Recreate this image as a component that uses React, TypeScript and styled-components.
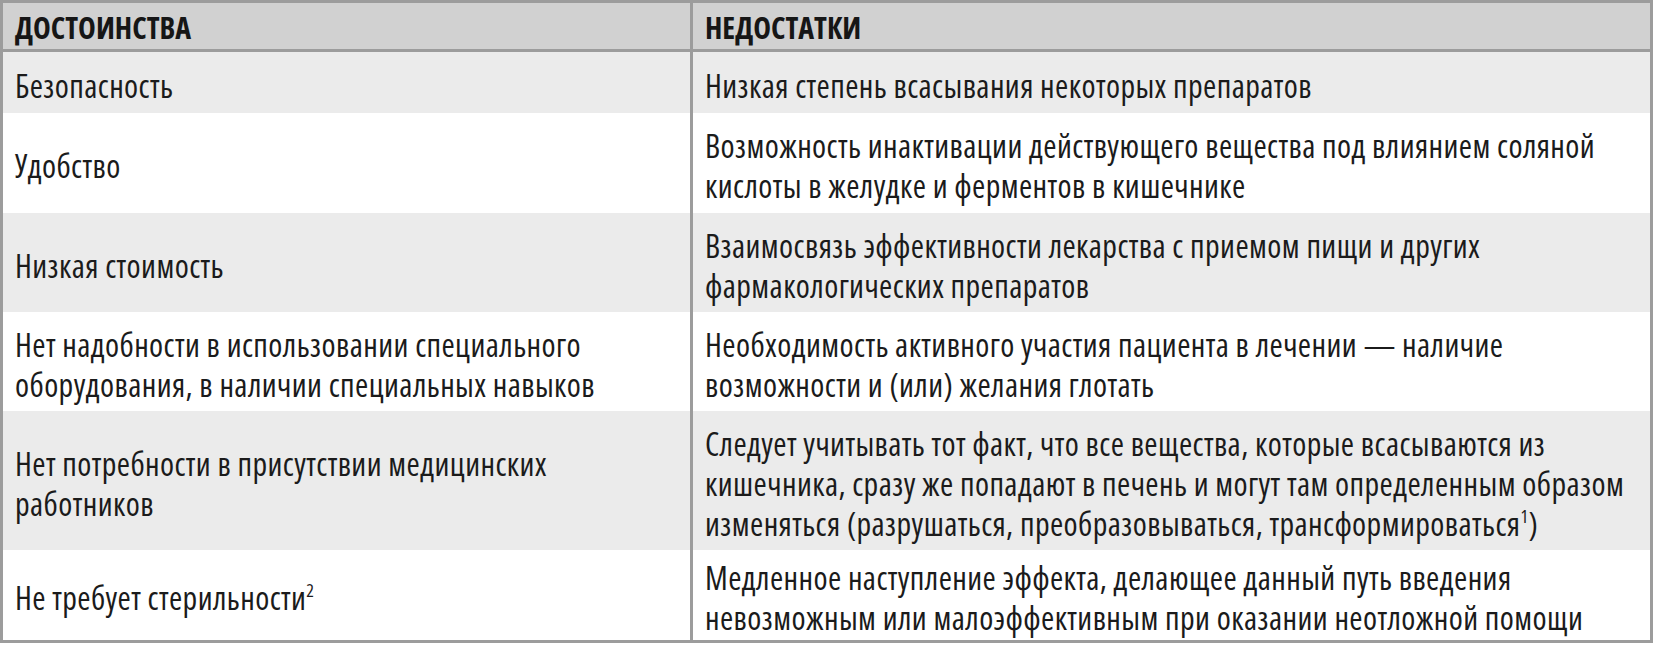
import React from 'react';
import styled, { createGlobalStyle } from 'styled-components';

const GlobalStyle = createGlobalStyle`
  html, body {
    margin: 0;
    padding: 0;
    background: #ffffff;
  }
  body {
    font-family: "Open Sans", "DejaVu Sans Condensed", sans-serif;
    font-stretch: 75%;
    color: #1b1b1b;
  }
`;

const Table = styled.div`
  width: 1653px;
  box-sizing: border-box;
  border: 3px solid #9c9c9c;
  display: grid;
  grid-template-columns: 687px 1fr;
  grid-template-rows: 49px 61px 100px 99px 99px 139px 90px;
`;

const HeadCell = styled.div<{ $divider?: boolean }>`
  background: #d1d1d1;
  border-bottom: 3px solid #9c9c9c;
  border-left: ${(p) => (p.$divider ? '3px solid #9c9c9c' : 'none')};
  display: flex;
  align-items: center;
  padding: 2px 12px 0;
  font-weight: 700;
  font-size: 30px;
  text-transform: uppercase;
  color: #161616;
`;

const Cell = styled.div<{ $shaded?: boolean; $divider?: boolean }>`
  background: ${(p) => (p.$shaded ? '#ebebeb' : '#ffffff')};
  border-left: ${(p) => (p.$divider ? '3px solid #9c9c9c' : 'none')};
  display: flex;
  align-items: center;
  padding: 6px 12px 0;
  font-size: 32px;
  line-height: 40px;
  letter-spacing: 0.4px;
  white-space: nowrap;
`;

const Sup = styled.sup`
  font-size: 18px;
  line-height: 0;
  vertical-align: 13px;
`;

type Row = { pro: React.ReactNode; con: React.ReactNode };

const rows: Row[] = [
  {
    pro: 'Безопасность',
    con: 'Низкая степень всасывания некоторых препаратов',
  },
  {
    pro: 'Удобство',
    con: (
      <>
        Возможность инактивации действующего вещества под влиянием соляной
        <br />
        кислоты в желудке и ферментов в кишечнике
      </>
    ),
  },
  {
    pro: 'Низкая стоимость',
    con: (
      <>
        Взаимосвязь эффективности лекарства с приемом пищи и других
        <br />
        фармакологических препаратов
      </>
    ),
  },
  {
    pro: (
      <>
        Нет надобности в использовании специального
        <br />
        оборудования, в наличии специальных навыков
      </>
    ),
    con: (
      <>
        Необходимость активного участия пациента в лечении — наличие
        <br />
        возможности и (или) желания глотать
      </>
    ),
  },
  {
    pro: (
      <>
        Нет потребности в присутствии медицинских
        <br />
        работников
      </>
    ),
    con: (
      <>
        Следует учитывать тот факт, что все вещества, которые всасываются из
        <br />
        кишечника, сразу же попадают в печень и могут там определенным образом
        <br />
        изменяться (разрушаться, преобразовываться, трансформироваться<Sup>1</Sup>)
      </>
    ),
  },
  {
    pro: (
      <>
        Не требует стерильности<Sup>2</Sup>
      </>
    ),
    con: (
      <>
        Медленное наступление эффекта, делающее данный путь введения
        <br />
        невозможным или малоэффективным при оказании неотложной помощи
      </>
    ),
  },
];

const App: React.FC = () => {
  return (
    <>
      <GlobalStyle />
      <Table>
        <HeadCell>Достоинства</HeadCell>
        <HeadCell $divider>Недостатки</HeadCell>
        {rows.map((row, i) => (
          <React.Fragment key={i}>
            <Cell $shaded={i % 2 === 0}>
              <span>{row.pro}</span>
            </Cell>
            <Cell $shaded={i % 2 === 0} $divider>
              <span>{row.con}</span>
            </Cell>
          </React.Fragment>
        ))}
      </Table>
    </>
  );
};

export default App;
